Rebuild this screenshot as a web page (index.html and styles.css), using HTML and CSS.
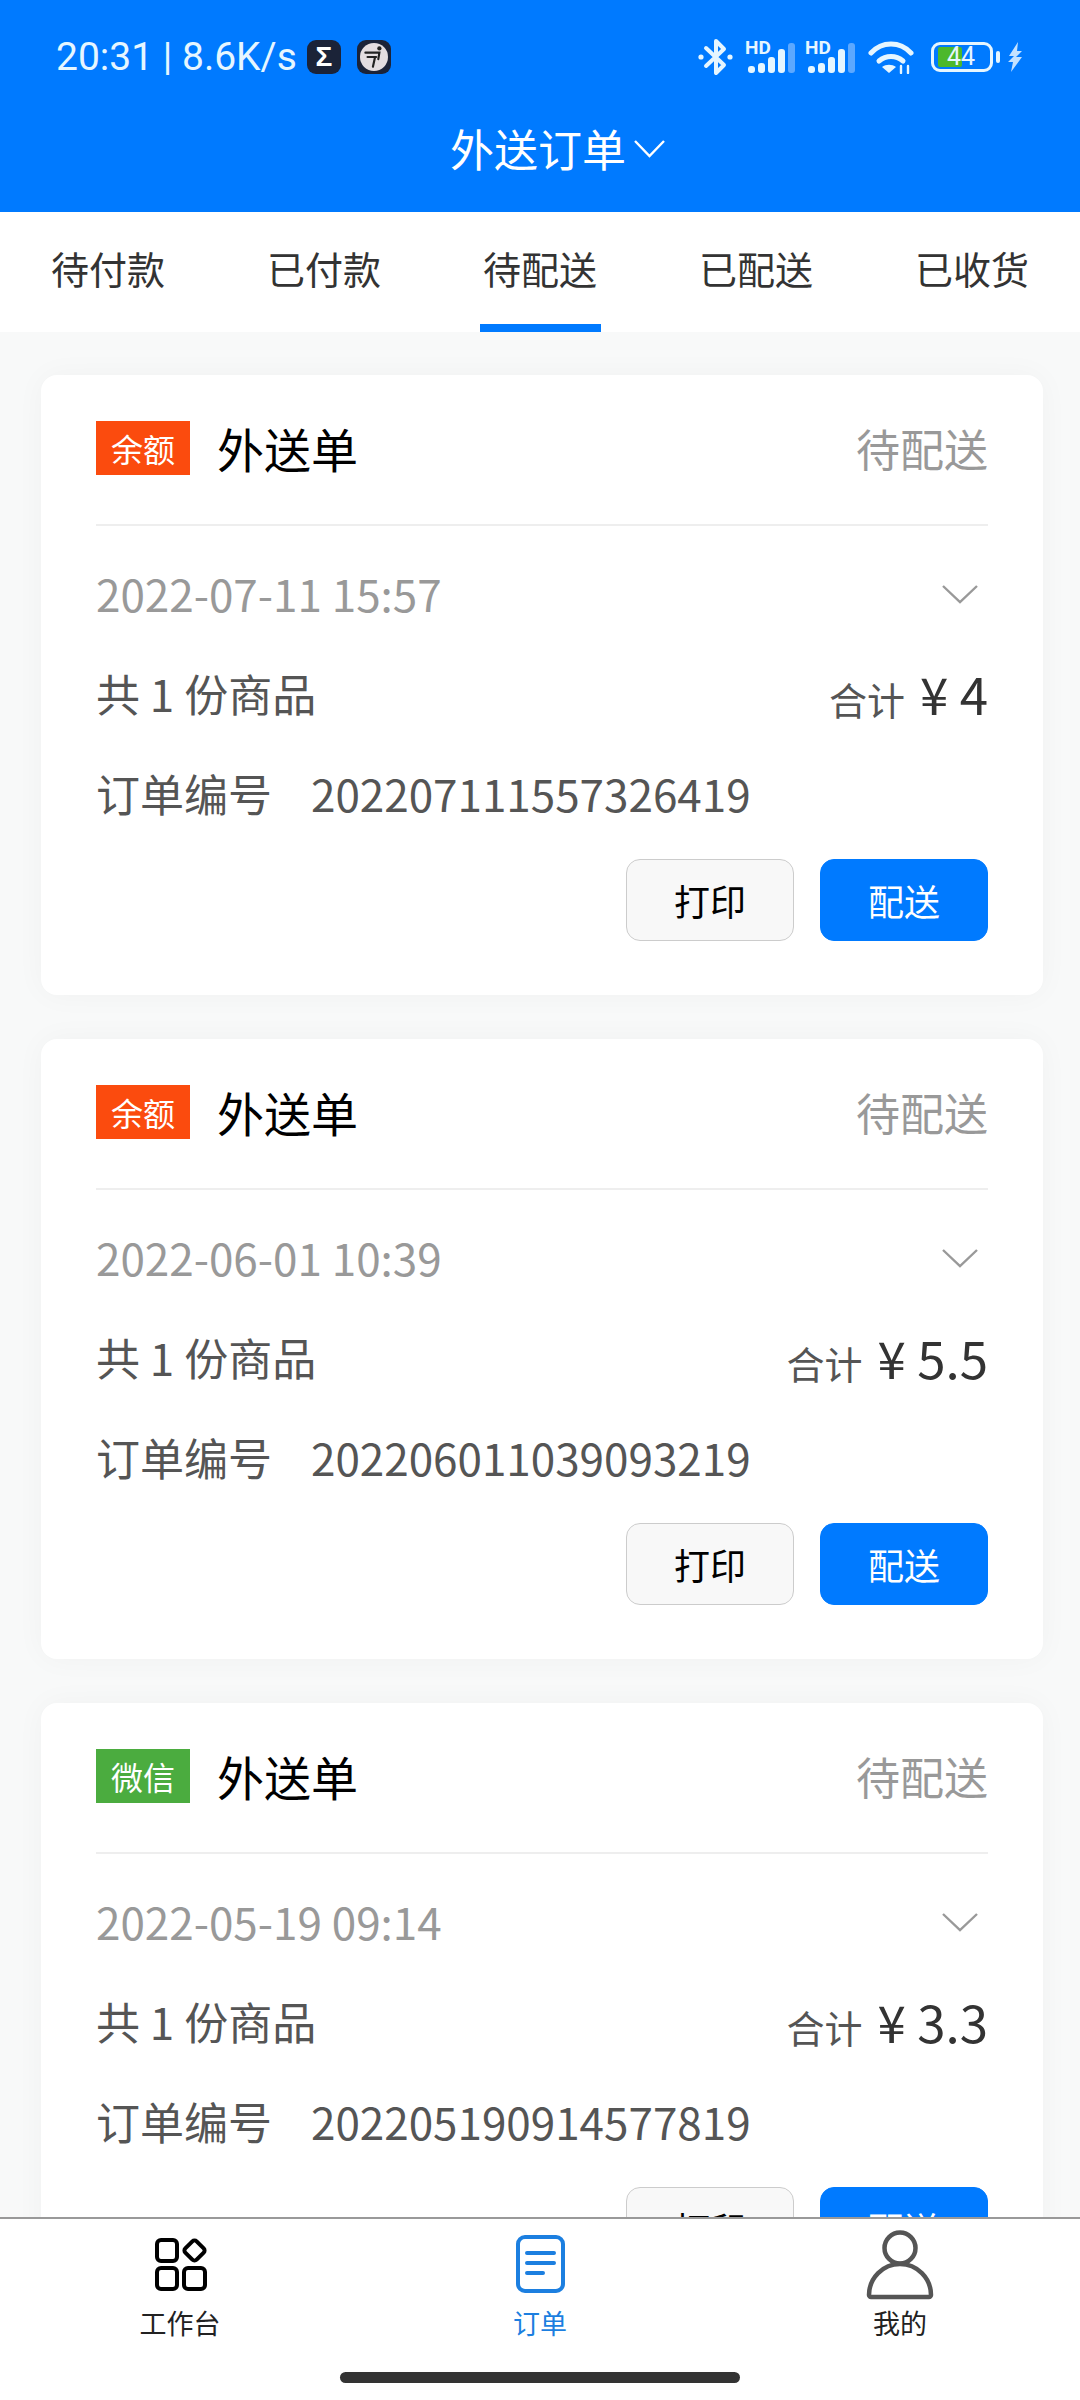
FILE: index.html
```html
<!DOCTYPE html>
<html lang="zh-CN">
<head>
  <meta charset="UTF-8">
  <meta name="viewport" content="width=device-width, initial-scale=1.0">
  <title>外送订单</title>
  <link rel="stylesheet" href="styles.css">
</head>
<body>

<header class="top">
  <div class="status">
    <span class="clock">20:31 | 8.6K/s</span>
    <span class="app-icon app-sigma">Σ</span>
    <span class="app-icon app-scooter">
      <svg width="28" height="28" viewBox="0 0 26 26" fill="none" stroke="#222" stroke-width="2" stroke-linecap="round"><circle cx="18" cy="5" r="2" fill="#222" stroke="none"/><path d="M5 9h13l-1 6"/><path d="M7 13h8"/><path d="M14 13l-2 9"/></svg>
    </span>
    <span class="status-right">
      <svg class="sb-bt" width="35" height="38" viewBox="0 0 35 38" fill="none" stroke="#e6f6ff" stroke-width="4" stroke-linejoin="round" stroke-linecap="round"><path d="M8 10l18 17-8 8V3l8 8L8 28"/><circle cx="3" cy="19" r="2.6" fill="#e6f6ff" stroke="none"/><circle cx="32" cy="19" r="2.6" fill="#e6f6ff" stroke="none"/></svg>
      <svg class="sb-signal" width="50" height="32" viewBox="0 0 50 32"><text class="sb-hd" x="0" y="13">HD</text><rect x="3" y="25" width="7" height="7" rx="3" fill="#e6f6ff"/><rect x="13" y="22" width="7" height="10" rx="3" fill="#e6f6ff"/><rect x="23" y="16" width="7" height="16" rx="3" fill="#e6f6ff"/><rect x="33" y="8" width="7" height="24" rx="3" fill="#e6f6ff"/><rect x="43" y="2" width="7" height="30" rx="3" fill="#5ca8ff"/></svg>
      <svg class="sb-signal" width="50" height="32" viewBox="0 0 50 32"><text class="sb-hd" x="0" y="13">HD</text><rect x="3" y="25" width="7" height="7" rx="3" fill="#e6f6ff"/><rect x="13" y="22" width="7" height="10" rx="3" fill="#e6f6ff"/><rect x="23" y="16" width="7" height="16" rx="3" fill="#e6f6ff"/><rect x="33" y="8" width="7" height="24" rx="3" fill="#e6f6ff"/><rect x="43" y="2" width="7" height="30" rx="3" fill="#5ca8ff"/></svg>
      <svg class="sb-wifi" width="46" height="34" viewBox="0 0 46 34" fill="none" stroke="#e6f6ff" stroke-width="5" stroke-linecap="round"><path d="M3 13C14 1 32 1 43 13"/><path d="M11 21c7-6 17-6 24 0"/><path d="M21 33l-7-6c4-3 10-3 14 0z" fill="#e6f6ff" stroke="none"/><path d="M33 33v-7M40 33v-7" stroke-width="2.400"/></svg>
      <span class="battery"><span class="battery-level"></span><span class="battery-num">44</span></span>
      <span class="battery-tip"></span>
      <svg class="sb-bolt" width="16" height="30" viewBox="0 0 16 30"><path d="M10 0L1 14h5l-6 6h5l-2 10 11-15h-6l6-6h-5z" fill="#c4e2ff"/></svg>
    </span>
  </div>
  <div class="page-title">
    <span>外送订单</span>
    <svg width="31" height="19" viewBox="0 0 31 19" fill="none" stroke="#fff" stroke-width="2.400"><path d="M1 2l14.500 15L30 2"/></svg>
  </div>
</header>

<nav class="tabs">
  <div class="tab">待付款</div>
  <div class="tab">已付款</div>
  <div class="tab active">待配送</div>
  <div class="tab">已配送</div>
  <div class="tab">已收货</div>
</nav>

<main class="list">

  <section class="card">
    <div class="card-head">
      <span class="pay-tag tag-balance">余额</span>
      <span class="card-title">外送单</span>
      <span class="card-state">待配送</span>
    </div>
    <div class="card-body">
      <div class="row">
        <span class="date">2022-07-11 15:57</span>
        <svg class="row-chevron" width="36" height="20" viewBox="0 0 36 20" fill="none" stroke="#999" stroke-width="2.400"><path d="M1 2l17 16L35 2"/></svg>
      </div>
      <div class="row">
        <span>共 1 份商品</span>
        <span class="total"><span class="total-label">合计</span><span class="total-num">¥ 4</span></span>
      </div>
      <div class="row row-order">
        <span>订单编号</span>
        <span class="order-no">202207111557326419</span>
      </div>
    </div>
    <div class="actions">
      <button class="btn">打印</button>
      <button class="btn btn-primary">配送</button>
    </div>
  </section>

  <section class="card">
    <div class="card-head">
      <span class="pay-tag tag-balance">余额</span>
      <span class="card-title">外送单</span>
      <span class="card-state">待配送</span>
    </div>
    <div class="card-body">
      <div class="row">
        <span class="date">2022-06-01 10:39</span>
        <svg class="row-chevron" width="36" height="20" viewBox="0 0 36 20" fill="none" stroke="#999" stroke-width="2.400"><path d="M1 2l17 16L35 2"/></svg>
      </div>
      <div class="row">
        <span>共 1 份商品</span>
        <span class="total"><span class="total-label">合计</span><span class="total-num">¥ 5.5</span></span>
      </div>
      <div class="row row-order">
        <span>订单编号</span>
        <span class="order-no">202206011039093219</span>
      </div>
    </div>
    <div class="actions">
      <button class="btn">打印</button>
      <button class="btn btn-primary">配送</button>
    </div>
  </section>

  <section class="card">
    <div class="card-head">
      <span class="pay-tag tag-wechat">微信</span>
      <span class="card-title">外送单</span>
      <span class="card-state">待配送</span>
    </div>
    <div class="card-body">
      <div class="row">
        <span class="date">2022-05-19 09:14</span>
        <svg class="row-chevron" width="36" height="20" viewBox="0 0 36 20" fill="none" stroke="#999" stroke-width="2.400"><path d="M1 2l17 16L35 2"/></svg>
      </div>
      <div class="row">
        <span>共 1 份商品</span>
        <span class="total"><span class="total-label">合计</span><span class="total-num">¥ 3.3</span></span>
      </div>
      <div class="row row-order">
        <span>订单编号</span>
        <span class="order-no">202205190914577819</span>
      </div>
    </div>
    <div class="actions">
      <button class="btn">打印</button>
      <button class="btn btn-primary">配送</button>
    </div>
  </section>

</main>

<footer class="bottom">
  <div class="bottom-items">
    <div class="bottom-item">
      <svg class="bottom-icon" width="70" height="70" viewBox="0 0 70 70" fill="none" stroke="#000" stroke-width="4" stroke-linejoin="round">
        <rect x="12" y="10" width="20" height="21" rx="4"/>
        <rect x="41.500" y="12.500" width="16" height="16" rx="3" transform="rotate(45 49.500 20.500)"/>
        <rect x="12" y="38" width="20" height="21" rx="4"/>
        <rect x="39" y="38" width="21" height="21" rx="4"/>
      </svg>
      <span>工作台</span>
    </div>
    <div class="bottom-item item-active">
      <svg class="bottom-icon" width="70" height="70" viewBox="0 0 70 70" fill="none" stroke="#1c7fe0" stroke-width="4" stroke-linecap="round">
        <rect x="13" y="7" width="45" height="54" rx="7"/>
        <path d="M22 23h27M22 33h27M22 43h16"/>
      </svg>
      <span>订单</span>
    </div>
    <div class="bottom-item">
      <svg class="bottom-icon" width="70" height="70" viewBox="0 0 70 70" fill="none" stroke="#555" stroke-width="4.500" stroke-linejoin="round">
        <circle cx="35" cy="18" r="15.500"/>
        <path d="M4 65c0-17 14-31 31-31s31 14 31 31c0 1-1 2-2 2H6c-1 0-2-1-2-2z"/>
      </svg>
      <span>我的</span>
    </div>
  </div>
  <div class="home-bar"></div>
</footer>

</body>
</html>
```

FILE: styles.css
```css
* {
  box-sizing: border-box;
}

body {
  font-family: "Noto Sans CJK SC", "Noto Sans", sans-serif;
  background-color: #f8f9f9;
  color: #555;
  display: flex;
  flex-direction: column;
  width: 1080px;
  height: 2400px;
  margin: 0;
  overflow: hidden;
}

.top {
  background-color: #007aff;
  height: 212px;
  flex-shrink: 0;
}

.status {
  display: flex;
  align-items: center;
  height: 114px;
  padding: 0 56px;
  color: #e6f6ff;
}

.clock {
  font-family: Roboto, sans-serif;
  font-size: 39px;
  width: 251px;
  white-space: nowrap;
}

.app-icon {
  display: flex;
  align-items: center;
  justify-content: center;
  width: 34px;
  height: 34px;
  border-radius: 9px;
  background-color: #1b2338;
  margin-right: 16px;
}

.app-sigma {
  font-family: "Liberation Sans", sans-serif;
  font-weight: bold;
  font-size: 28px;
  color: #fff;
}

.app-scooter svg {
  background-color: #e3dde0;
  border-radius: 50%;
}

.status-right {
  display: flex;
  align-items: center;
  margin-left: auto;
}

.sb-bt {
  margin-right: 12px;
}

.sb-signal {
  margin-right: 10px;
  overflow: visible;
}

.sb-hd {
  font-family: Roboto, sans-serif;
  font-size: 19px;
  font-weight: bold;
  fill: #e6f6ff;
}

.sb-wifi {
  margin: 0 17px 0 3px;
}

.battery {
  position: relative;
  display: block;
  width: 62px;
  height: 30px;
  border: 3px solid #e6f6ff;
  border-radius: 9px;
}

.battery-level {
  display: block;
  width: 24px;
  height: 20px;
  margin: 2px 0 0 4px;
  background-color: #4cb82c;
  border-radius: 2px;
}

.battery-num {
  position: absolute;
  left: 13px;
  top: -3px;
  font-family: Roboto, sans-serif;
  font-size: 25px;
  line-height: 30px;
  color: #e6f6ff;
}

.battery-tip {
  width: 4px;
  height: 12px;
  margin: 0 8px 0 3px;
  background-color: #e6f6ff;
  border-radius: 2px;
}

.page-title {
  display: flex;
  align-items: center;
  justify-content: center;
  gap: 8px;
  height: 68px;
  padding-left: 35px;
  font-size: 44px;
  color: #fff;
}

.tabs {
  display: grid;
  grid-template-columns: repeat(5, 1fr);
  height: 120px;
  flex-shrink: 0;
  background-color: #fff;
}

.tab {
  position: relative;
  display: flex;
  align-items: center;
  justify-content: center;
  padding-bottom: 10px;
  font-size: 38px;
  color: #333;
}

.tab.active::after {
  content: "";
  position: absolute;
  left: 48px;
  right: 47px;
  bottom: 0;
  height: 8px;
  background-color: #007aff;
}

.list {
  flex: 1;
  min-height: 0;
  overflow: hidden;
  display: flex;
  flex-direction: column;
  gap: 44px;
  padding: 43px 37px 0 41px;
}

.card {
  flex-shrink: 0;
  height: 620px;
  padding: 0 55px;
  background-color: #fff;
  border-radius: 16px;
  box-shadow: 0 0 30px rgba(0, 0, 0, 0.035);
}

.card-head {
  display: flex;
  align-items: center;
  height: 151px;
  padding-bottom: 4px;
  border-bottom: 2px solid #eee;
}

.pay-tag {
  display: flex;
  align-items: center;
  justify-content: center;
  width: 94px;
  height: 54px;
  font-size: 32px;
  color: #fff;
}

.tag-balance {
  background-color: #fb4b0e;
}

.tag-wechat {
  background-color: #4bac3f;
}

.card-title {
  margin-left: 27px;
  font-size: 47px;
  color: #000;
}

.card-state {
  margin-left: auto;
  font-size: 44px;
  color: #999;
}

.card-body {
  padding-top: 17px;
}

.row {
  display: flex;
  align-items: center;
  justify-content: space-between;
  height: 100px;
  font-size: 44px;
}

.date {
  color: #999;
}

.row-chevron {
  margin: 2px 10px 0 0;
}

.total {
  display: flex;
  align-items: center;
  gap: 15px;
}

.total-label {
  font-size: 38px;
  margin-top: 10px;
}

.total-num {
  font-size: 51px;
  color: #333;
}

.row-order {
  justify-content: flex-start;
  gap: 39px;
}

.order-no {
  white-space: nowrap;
}

.actions {
  display: flex;
  justify-content: flex-end;
  gap: 26px;
  margin-top: 16px;
}

.btn {
  width: 168px;
  height: 82px;
  padding: 0;
  font-family: inherit;
  font-size: 36px;
  color: #000;
  background-color: #f8f8f8;
  border: 1px solid #ccc;
  border-radius: 14px;
}

.btn-primary {
  color: #fff;
  background-color: #007aff;
  border-color: #007aff;
}

.bottom {
  flex-shrink: 0;
  height: 183px;
  background-color: #fff;
  border-top: 2px solid #999;
}

.bottom-items {
  display: grid;
  grid-template-columns: repeat(3, 1fr);
  padding-top: 11px;
}

.bottom-item {
  display: flex;
  flex-direction: column;
  align-items: center;
  font-size: 27px;
  line-height: 36px;
  color: #222;
}

.item-active {
  color: #1c7fe0;
}

.bottom-icon {
  margin-bottom: 5px;
}

.home-bar {
  width: 400px;
  height: 11px;
  margin: 31px auto 0;
  background-color: #333;
  border-radius: 6px;
}
```
